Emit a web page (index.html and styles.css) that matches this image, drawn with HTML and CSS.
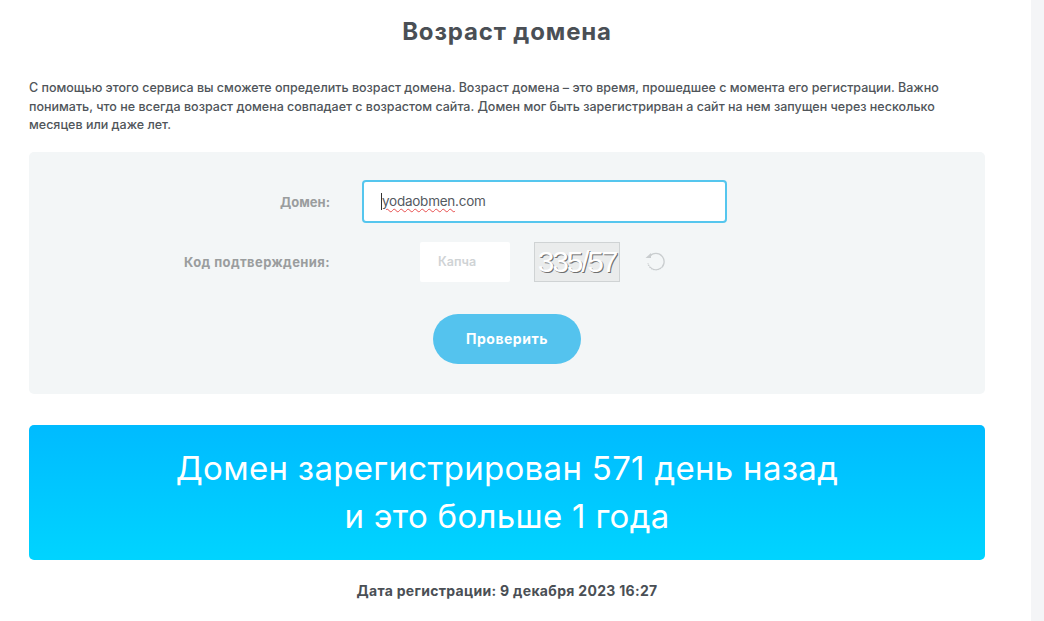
FILE: index.html
```html
<!DOCTYPE html>
<html lang="en">
<head>
    <meta charset="UTF-8">
    <title>Возраст домена</title>
    <link rel="stylesheet" href="styles.css">
</head>
<body>
    <div class="page">
        <main class="content">
            <h1 class="title">Возраст домена</h1>
            <p class="intro">С помощью этого сервиса вы сможете определить возраст домена. Возраст домена – это время, прошедшее с момента его регистрации. Важно<br>понимать, что не всегда возраст домена совпадает с возрастом сайта. Домен мог быть зарегистрирван а сайт на нем запущен через несколько<br>месяцев или даже лет.</p>

            <form class="panel">
                <div class="row row-domain">
                    <label class="label">Домен:</label>
                    <div class="domain-input"><span class="caret"></span><span class="misspelled">yodaobmen</span>.com</div>
                </div>
                <div class="row row-captcha">
                    <label class="label">Код подтверждения:</label>
                    <div class="captcha">
                        <div class="captcha-input">Капча</div>
                        <div class="captcha-img"><span>335/57</span></div>
                        <svg class="refresh" width="24" height="24" viewBox="0 0 24 24" fill="none">
                            <path d="M5.5 6.5A8.2 8.2 0 1 1 3.8 13" stroke="#c9cdcf" stroke-width="1.3"/>
                            <path d="M18.5 18a8.2 8.2 0 0 1-14.7-5" stroke="#f3f6f7" stroke-width="1.5" stroke-dasharray="1.3 1.3"/>
                            <path d="M1.5 8h5.5V3z" fill="#c9cdcf"/>
                        </svg>
                    </div>
                </div>
                <div class="actions">
                    <button type="button" class="check-btn">Проверить</button>
                </div>
            </form>

            <div class="result">Домен зарегистрирован 571 день назад<br>и это больше 1 года</div>
            <p class="reg-date">Дата регистрации: 9 декабря 2023 16:27</p>
        </main>
        <div class="scroll-track"></div>
    </div>
</body>
</html>
```

FILE: styles.css
```css
html, body {
    height: 100%;
}

body {
    margin: 0;
    overflow: hidden;
    background-color: #fff;
    color: #4a4f55;
    font-family: Inter, "Open Sans", sans-serif;
}

.page {
    display: flex;
    height: 621px;
}

.content {
    width: 956px;
    padding: 0 46px 0 29px;
}

.scroll-track {
    width: 13px;
    background-color: #f4f5f7;
}

.title {
    margin: 17px 0 0;
    font-size: 24px;
    line-height: 29px;
    font-weight: 700;
    letter-spacing: 0.85px;
    text-align: center;
    color: #4a4f55;
}

.intro {
    margin: 33px 0 0;
    font-size: 12.5px;
    line-height: 18.5px;
    font-weight: 500;
    color: #50555a;
    white-space: nowrap;
}

.panel {
    margin-top: 17px;
    height: 242px;
    box-sizing: border-box;
    padding-top: 28px;
    background-color: #f3f6f7;
    border-radius: 5px;
}

.row {
    display: grid;
    grid-template-columns: 301px 365px;
    column-gap: 32px;
    align-items: center;
}

.label {
    text-align: right;
    font-size: 13px;
    font-weight: 700;
    letter-spacing: 0.4px;
    color: #9a9d9e;
}

.row-domain .label {
    padding-top: 2px;
    letter-spacing: 0;
}

.domain-input {
    display: flex;
    align-items: center;
    box-sizing: border-box;
    height: 43px;
    padding-left: 17px;
    background-color: #fff;
    border: 2px solid #55c6ee;
    border-radius: 4px;
    font-size: 13.5px;
    letter-spacing: -0.25px;
    color: #555a5f;
}

.caret {
    width: 1px;
    height: 17px;
    background-color: #333;
}

.misspelled {
    text-decoration: underline wavy #e8504f 1px;
    text-underline-offset: 2px;
}

.row-captcha {
    margin-top: 19px;
}

.captcha {
    display: flex;
    align-items: center;
    padding-left: 58px;
}

.captcha-input {
    display: flex;
    align-items: center;
    box-sizing: border-box;
    width: 90px;
    height: 40px;
    padding-left: 18px;
    background-color: #fff;
    border-radius: 2px;
    font-size: 12.5px;
    font-weight: 600;
    color: #cfd3d5;
}

.captcha-img {
    display: flex;
    align-items: center;
    justify-content: center;
    box-sizing: border-box;
    width: 86px;
    height: 40px;
    margin-left: 24px;
    background-color: #eaecec;
    border: 1px solid #cfd3d4;
    overflow: hidden;
    font-family: "Liberation Sans", sans-serif;
    font-size: 30px;
    letter-spacing: -2.2px;
    color: #fff;
    text-shadow: 1px 1px 0 #6f6f6f;
}

.refresh {
    margin-left: 24px;
}

.actions {
    display: flex;
    justify-content: center;
    margin-top: 32px;
}

.check-btn {
    width: 148px;
    height: 50px;
    background-color: #54c3ee;
    border: none;
    border-radius: 25px;
    font-family: inherit;
    font-size: 14px;
    font-weight: 700;
    letter-spacing: 0.5px;
    color: #fff;
}

.result {
    margin-top: 31px;
    height: 135px;
    box-sizing: border-box;
    padding-top: 19px;
    background: linear-gradient(180deg, #00bbff 0%, #00d4ff 100%);
    border-radius: 5px;
    font-size: 33px;
    line-height: 48px;
    font-weight: 400;
    letter-spacing: 0.3px;
    text-align: center;
    color: #fff;
}

.reg-date {
    margin: 22px 0 0;
    font-size: 14px;
    line-height: 18px;
    font-weight: 700;
    letter-spacing: 0.3px;
    text-align: center;
    color: #4a4f55;
}
```
